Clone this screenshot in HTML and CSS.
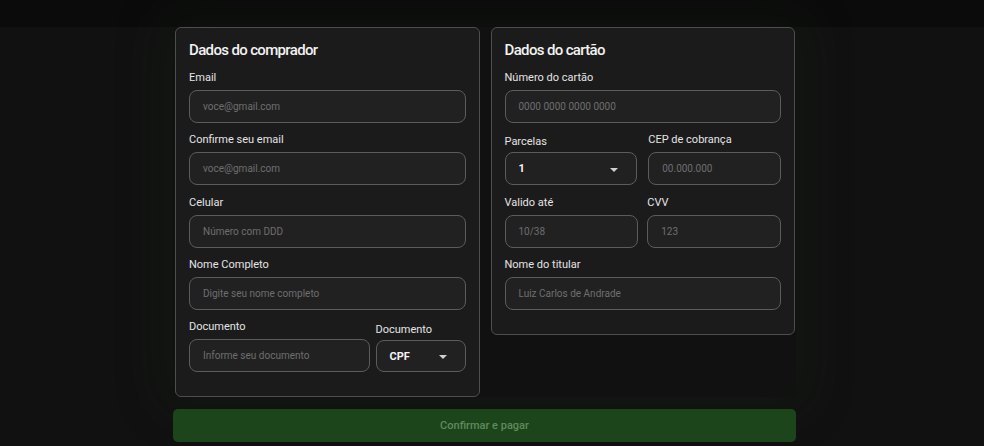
FILE: index.html
```html
<!DOCTYPE html>
<html lang="pt-BR">
<head>
<meta charset="utf-8">
<title>Checkout</title>
<link rel="stylesheet" href="styles.css">
</head>
<body>
<div class="topbar"></div>
<main class="checkout">
  <div class="cards">
    <section class="card">
      <h2 class="card-title">Dados do comprador</h2>
      <div class="fields">
        <div class="field">
          <label class="label">Email</label>
          <div class="input"><span class="ph">voce@gmail.com</span></div>
        </div>
        <div class="field">
          <label class="label">Confirme seu email</label>
          <div class="input"><span class="ph">voce@gmail.com</span></div>
        </div>
        <div class="field">
          <label class="label">Celular</label>
          <div class="input"><span class="ph">Número com DDD</span></div>
        </div>
        <div class="field">
          <label class="label">Nome Completo</label>
          <div class="input"><span class="ph">Digite seu nome completo</span></div>
        </div>
        <div class="row doc-row">
          <div class="field grow">
            <label class="label">Documento</label>
            <div class="input"><span class="ph">Informe seu documento</span></div>
          </div>
          <div class="field doc-type">
            <label class="label sel-label">Documento</label>
            <div class="input select short"><span class="val">CPF</span><span class="caret"></span></div>
          </div>
        </div>
      </div>
    </section>
    <section class="card">
      <h2 class="card-title">Dados do cartão</h2>
      <div class="fields">
        <div class="field">
          <label class="label">Número do cartão</label>
          <div class="input"><span class="ph">0000 0000 0000 0000</span></div>
        </div>
        <div class="grid2 end">
          <div class="field">
            <label class="label sel-label">Parcelas</label>
            <div class="input select"><span class="val">1</span><span class="caret"></span></div>
          </div>
          <div class="field">
            <label class="label">CEP de cobrança</label>
            <div class="input"><span class="ph">00.000.000</span></div>
          </div>
        </div>
        <div class="grid2 tight">
          <div class="field">
            <label class="label">Valido até</label>
            <div class="input"><span class="ph">10/38</span></div>
          </div>
          <div class="field">
            <label class="label">CVV</label>
            <div class="input"><span class="ph">123</span></div>
          </div>
        </div>
        <div class="field">
          <label class="label">Nome do titular</label>
          <div class="input"><span class="ph">Luiz Carlos de Andrade</span></div>
        </div>
      </div>
    </section>
  </div>
  <button class="pay">Confirmar e pagar</button>
</main>
</body>
</html>
```

FILE: styles.css
```css
* { box-sizing: border-box; }
html, body { margin: 0; padding: 0; }
body {
  background: #111111;
  font-family: Roboto, "Liberation Sans", Arial, sans-serif;
  color: #e8e8e8;
  height: 446px;
  overflow: hidden;
}
.topbar {
  height: 27px;
  background: #0b0b0b;
}
.checkout {
  width: 623px;
  margin-left: 173px;
}
.cards {
  display: flex;
  gap: 11px;
  align-items: flex-start;
  padding: 0 1px 0 2px;
  box-shadow: 0 0 45px 8px rgba(22, 40, 22, 0.3);
}
.card {
  flex: 1;
  background: #1c1b1c;
  border: 1.5px solid #4e4e4e;
  border-radius: 6px;
  padding: 12px 13px 24px 13px;
}
.card-title {
  margin: 0 0 11px 0;
  font-size: 15px;
  line-height: 20px;
  font-weight: 500;
  letter-spacing: -0.65px;
  color: #f2f2f2;
}
.fields {
  display: flex;
  flex-direction: column;
  gap: 10.3px;
}
.field {
  display: flex;
  flex-direction: column;
}
.label {
  font-size: 11px;
  line-height: 14px;
  color: #e4e4e4;
  margin-bottom: 5px;
}
.sel-label { margin-bottom: 3px; }
.input {
  height: 33px;
  background: #222122;
  border: 1.5px solid #5c5c5c;
  border-radius: 8px;
  display: flex;
  align-items: center;
  padding: 0 13px;
}
.ph {
  font-size: 10px;
  color: #6e6e6e;
}
.val {
  font-size: 11px;
  font-weight: 700;
  color: #f4f4f4;
}
.select {
  justify-content: space-between;
  padding-right: 18px;
}
.short { height: 32px; }
.caret {
  width: 0;
  height: 0;
  border-left: 4px solid transparent;
  border-right: 4px solid transparent;
  border-top: 4px solid #d0d0d0;
  margin-top: 2px;
}
.row {
  display: flex;
  gap: 6px;
  align-items: flex-end;
}
.grow { flex: 1; }
.doc-type { width: 90px; }
.grid2 {
  display: grid;
  grid-template-columns: 1fr 1fr;
  column-gap: 11px;
}
.grid2.end { align-items: end; }
.grid2.tight { column-gap: 9px; }
.pay {
  display: block;
  width: 100%;
  height: 33px;
  margin-top: 12px;
  border: none;
  border-radius: 5px;
  background: #1d451b;
  color: #5f8b5c;
  font-family: Roboto, "Liberation Sans", Arial, sans-serif;
  font-size: 11px;
  font-weight: 500;
}
```
